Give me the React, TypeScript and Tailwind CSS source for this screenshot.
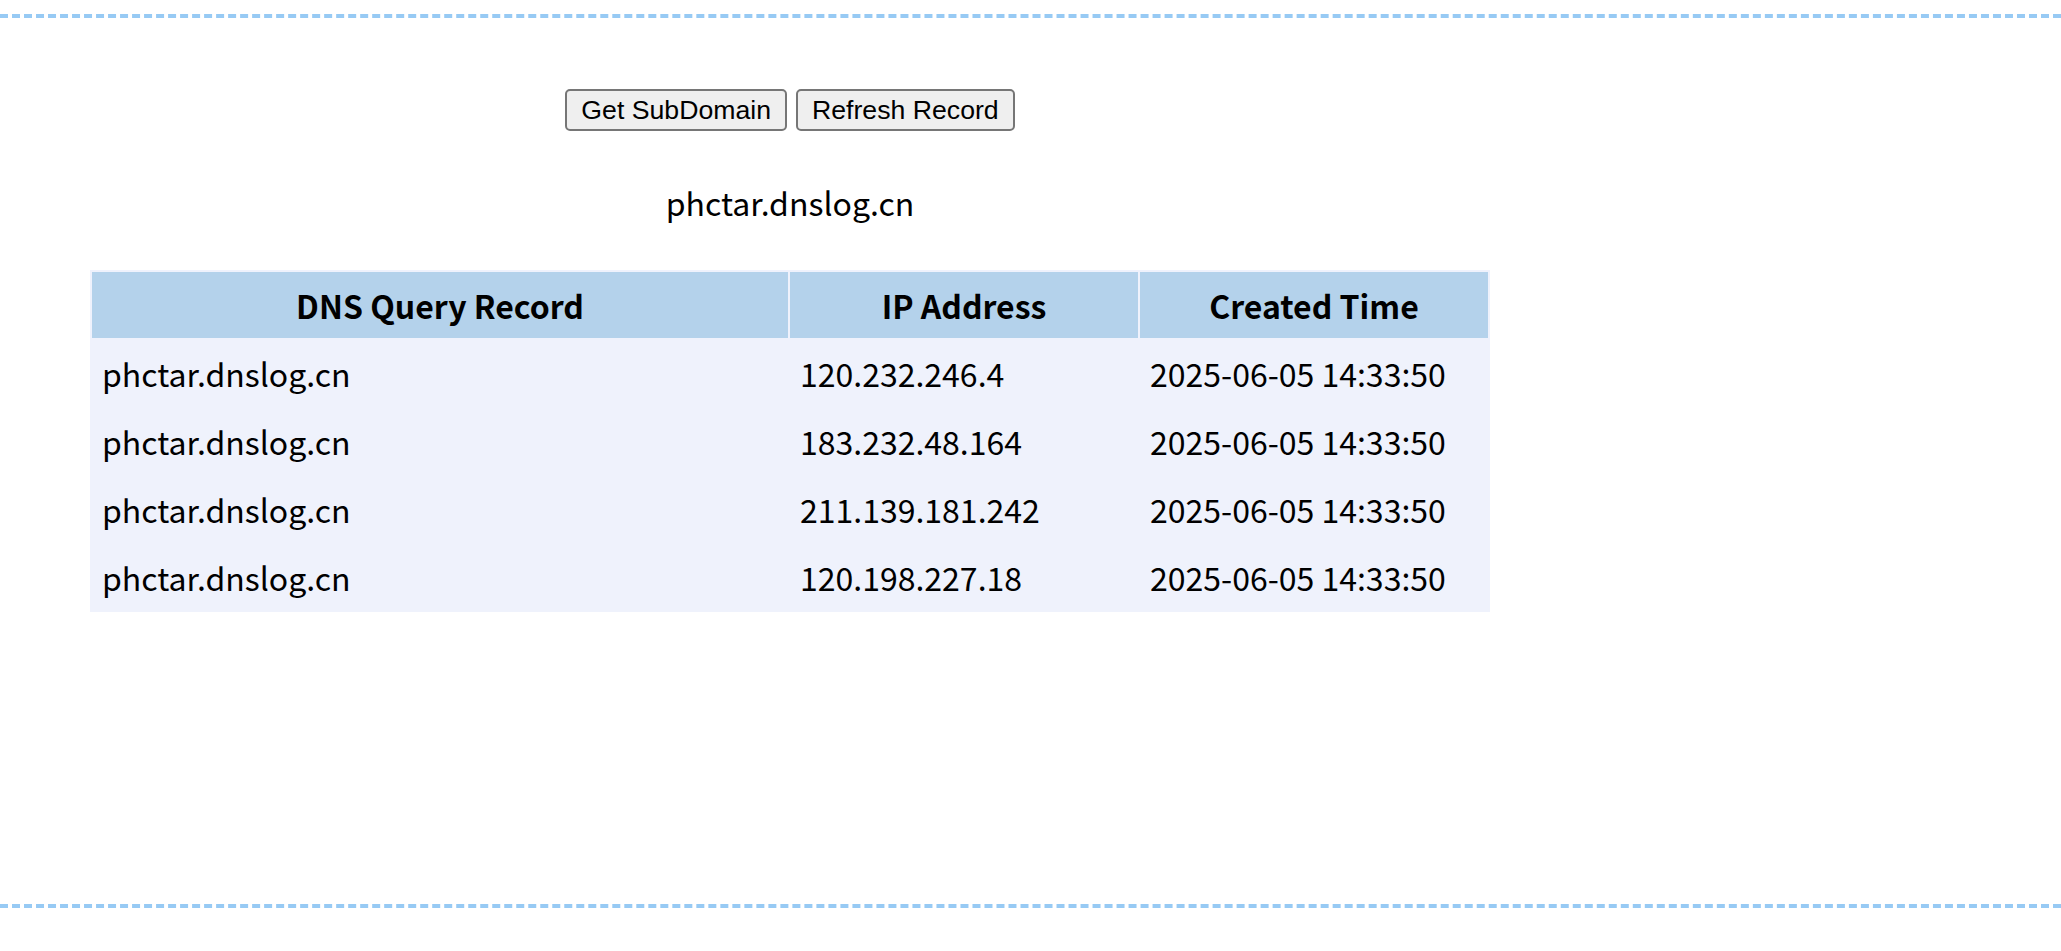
const records = [
  { domain: "phctar.dnslog.cn", ip: "120.232.246.4", time: "2025-06-05 14:33:50" },
  { domain: "phctar.dnslog.cn", ip: "183.232.48.164", time: "2025-06-05 14:33:50" },
  { domain: "phctar.dnslog.cn", ip: "211.139.181.242", time: "2025-06-05 14:33:50" },
  { domain: "phctar.dnslog.cn", ip: "120.198.227.18", time: "2025-06-05 14:33:50" },
];

const sans = "font-['Noto_Sans_CJK_SC','Noto_Sans',sans-serif]";

export default function App() {
  return (
    <div className="min-h-screen bg-white pt-[14px]">
      <div className="h-[894px] border-y-4 border-dashed border-[#97caf4]">
        <div className={`flex w-[1580px] flex-col items-center px-[90px] pt-[71px] text-black ${sans}`}>
          <div className="flex gap-[9px] font-['Liberation_Sans',Arial,sans-serif]">
            <button className="h-[42px] rounded-[5px] border-2 border-[#767676] bg-[#efefef] px-[14px] text-[26.67px] leading-none text-black">
              Get SubDomain
            </button>
            <button className="h-[42px] rounded-[5px] border-2 border-[#767676] bg-[#efefef] px-[14px] text-[26.67px] leading-none text-black">
              Refresh Record
            </button>
          </div>

          <div className="mt-[48px] text-[32px] leading-[46px]">phctar.dnslog.cn</div>

          <table className="mt-[45px] w-[1400px] table-fixed border-separate border-spacing-[2px] bg-[#eff2fc] text-[32px] leading-[46px]">
            <thead>
              <tr className="bg-[#b4d2eb]">
                <th className="w-[696px] px-[10px] py-[10px] font-bold">DNS Query Record</th>
                <th className="w-[348px] px-[10px] py-[10px] font-bold">IP Address</th>
                <th className="w-[348px] px-[10px] py-[10px] font-bold">Created Time</th>
              </tr>
            </thead>
            <tbody>
              {records.map((row) => (
                <tr key={row.ip}>
                  <td className="px-[10px] py-[10px] text-left">{row.domain}</td>
                  <td className="px-[10px] py-[10px] text-left">{row.ip}</td>
                  <td className="px-[10px] py-[10px] text-left">{row.time}</td>
                </tr>
              ))}
            </tbody>
          </table>
        </div>
      </div>
    </div>
  );
}
